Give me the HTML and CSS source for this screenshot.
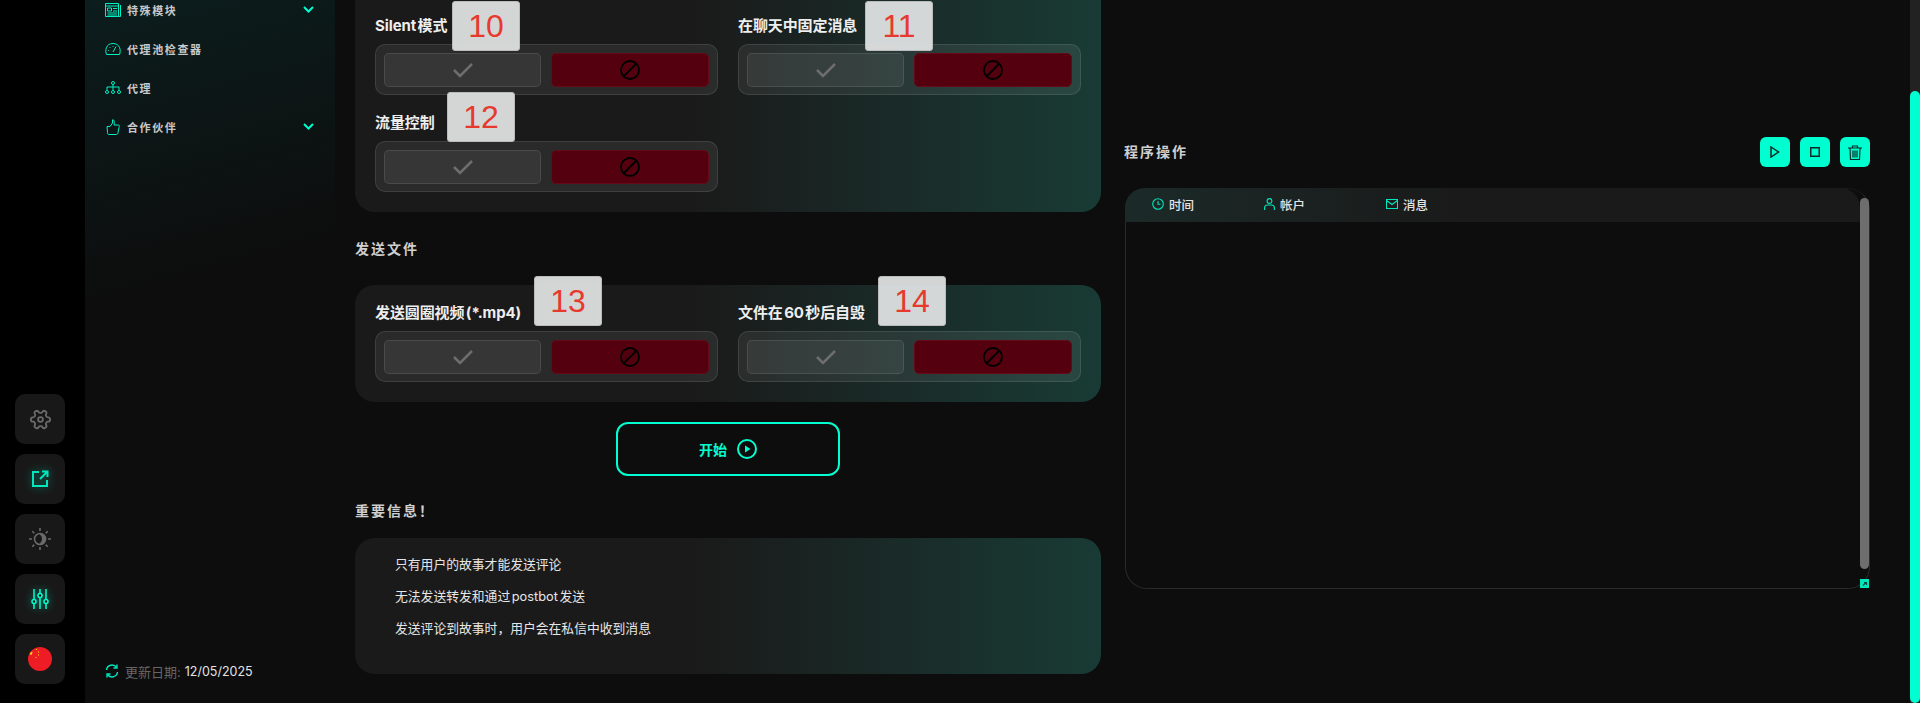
FILE: index.html
```html
<!DOCTYPE html>
<html lang="zh">
<head>
    <meta charset="UTF-8">
    <title>程序操作</title>
    <link rel="stylesheet" href="styles.css">
</head>
<body>
    <div class="rail">
        <button class="rail-btn">
            <svg class="gear" width="23" height="23" viewBox="0 0 24 24" fill="none" stroke="#6a6a6a" stroke-width="1.900"><path d="M12.22 2h-.44a2 2 0 0 0-2 2v.18a2 2 0 0 1-1 1.73l-.43.25a2 2 0 0 1-2 0l-.15-.08a2 2 0 0 0-2.73.73l-.22.38a2 2 0 0 0 .73 2.73l.15.1a2 2 0 0 1 1 1.72v.51a2 2 0 0 1-1 1.74l-.15.09a2 2 0 0 0-.73 2.73l.22.38a2 2 0 0 0 2.73.73l.15-.08a2 2 0 0 1 2 0l.43.25a2 2 0 0 1 1 1.73V20a2 2 0 0 0 2 2h.44a2 2 0 0 0 2-2v-.18a2 2 0 0 1 1-1.73l.43-.25a2 2 0 0 1 2 0l.15.08a2 2 0 0 0 2.73-.73l.22-.39a2 2 0 0 0-.73-2.73l-.15-.08a2 2 0 0 1-1-1.74v-.5a2 2 0 0 1 1-1.74l.15-.09a2 2 0 0 0 .73-2.73l-.22-.38a2 2 0 0 0-2.73-.73l-.15.08a2 2 0 0 1-2 0l-.43-.25a2 2 0 0 1-1-1.73V4a2 2 0 0 0-2-2z"/><circle cx="12" cy="12" r="2.500"/></svg>
        </button>
        <button class="rail-btn glow">
            <svg width="18" height="18" viewBox="0 0 18 18" fill="none" stroke="#00e6bd" stroke-width="2"><path d="M8 2H2V16H16V10"/><path d="M9 9L16 2M11 1.500H16.500V7"/></svg>
        </button>
        <button class="rail-btn">
            <svg width="24" height="24" viewBox="0 0 24 24" fill="none" stroke="#6a6a6a" stroke-width="1.600"><circle cx="12" cy="12" r="5.500"/><path d="M12.500 7A5 5 0 0 1 12.500 17A6.500 6.500 0 0 0 12.500 7Z" fill="#6a6a6a"/><path d="M12 1V4M12 20V23M1 12H4M20 12H23M4.200 4.200L6.300 6.300M17.700 17.700L19.800 19.800M4.200 19.800L6.300 17.700M17.700 6.300L19.800 4.200"/></svg>
        </button>
        <button class="rail-btn glow">
            <svg width="18" height="20" viewBox="0 0 18 20" fill="#181818" stroke="#00ffd0" stroke-width="1.500"><path d="M3 0V20M9 0V20M15 0V20"/><circle cx="3" cy="12.500" r="2"/><circle cx="9" cy="6.500" r="2"/><circle cx="15" cy="12.500" r="2"/></svg>
        </button>
        <button class="rail-btn">
            <svg width="24" height="24" viewBox="0 0 24 24"><circle cx="12" cy="12" r="12" fill="#ee1c25"/><path d="M2 6L4.500 4.500L4 7.500L2.500 8Z" fill="#ffde00"/><path d="M8 2.500H9M10.500 4.500V5.500M10.500 7.500V8.500M7.500 10.500H8.500" stroke="#ffde00"/></svg>
        </button>
    </div>

    <aside class="sidebar">
        <nav class="side-nav">
            <div class="side-item">
                <svg class="side-icon" width="16" height="14" viewBox="0 0 16 14" fill="none" stroke="#00f0c4"><path d="M.5.500H13.500V13.500H.5ZM15.500 2V13.500H13.500M.5 3H13.500"/><path d="M2.500 5H6.500V8H2.500ZM8 5.500H12M8 8H12M2.500 10H12M2.500 12H12"/></svg>
                <span>特殊模块</span>
                <svg class="chevron" width="11" height="7" viewBox="0 0 11 7" fill="none" stroke="#00ffd0" stroke-width="2"><path d="M1 1L5.500 5.500L10 1"/></svg>
            </div>
            <div class="side-item">
                <svg class="side-icon" width="16" height="12" viewBox="0 0 16 12" fill="none" stroke="#00f0c4"><path d="M1.500 11.500H14.500C16 8 15.500 .5 8 .5C.5 .5 0 8 1.500 11.500Z"/><path d="M8 9L11 3.500M3.500 7V7.800M5 4V4.800M8 3V3.800"/></svg>
                <span>代理池检查器</span>
            </div>
            <div class="side-item">
                <svg class="side-icon" width="16" height="13" viewBox="0 0 16 13" fill="none" stroke="#00f0c4"><circle cx="8" cy="2" r="1.500"/><path d="M8 3.500V6M2 9V6H14V9M8 6V9"/><circle cx="2" cy="11" r="1.500"/><circle cx="8" cy="11" r="1.500"/><circle cx="14" cy="11" r="1.500"/></svg>
                <span>代理</span>
            </div>
            <div class="side-item">
                <svg class="side-icon" width="16" height="16" viewBox="0 0 16 16" fill="none" stroke="#00f0c4"><path d="M2 7.500H5L7.500 4V.8C9.500 .5 9.500 3.500 9 6H13C14.500 6 14.500 7 14 8.500L13 13.500C13 15 12 15.500 11 15.500H4C2.800 15.500 2.500 15 2.500 13.500Z"/></svg>
                <span>合作伙伴</span>
                <svg class="chevron" width="11" height="7" viewBox="0 0 11 7" fill="none" stroke="#00ffd0" stroke-width="2"><path d="M1 1L5.500 5.500L10 1"/></svg>
            </div>
        </nav>
        <div class="updated">
            <svg width="14" height="14" viewBox="0 0 14 14" fill="none" stroke="#00e6bd" stroke-width="1.400"><path d="M1.500 6A5.500 5.500 0 0 1 11.500 3.500M12.500 8A5.500 5.500 0 0 1 2.500 10.500"/><path d="M12 .5V4H8.500M2 13.500V10H5.500"/></svg>
            <span class="updated-label">更新日期:</span>
            <span class="updated-date">12/05/2025</span>
        </div>
    </aside>

    <main class="main">
        <div class="settings">
            <div class="card card-top">
                <div class="field-grid">
                    <div class="field">
                        <label>Silent 模式</label>
                        <div class="switch">
                            <button class="opt-on"><svg width="20" height="15" viewBox="0 0 20 15" fill="none" stroke="#6e6e6e" stroke-width="2.500"><path d="M1 7L7 13L19 1"/></svg></button>
                            <button class="opt-off"><svg width="20" height="20" viewBox="0 0 20 20" fill="none" stroke="#000" stroke-width="1.800"><circle cx="10" cy="10" r="9"/><path d="M16 4L4 16"/></svg></button>
                        </div>
                        <div class="tag tag-10">10</div>
                    </div>
                    <div class="field">
                        <label>在聊天中固定消息</label>
                        <div class="switch">
                            <button class="opt-on"><svg width="20" height="15" viewBox="0 0 20 15" fill="none" stroke="#6e6e6e" stroke-width="2.500"><path d="M1 7L7 13L19 1"/></svg></button>
                            <button class="opt-off"><svg width="20" height="20" viewBox="0 0 20 20" fill="none" stroke="#000" stroke-width="1.800"><circle cx="10" cy="10" r="9"/><path d="M16 4L4 16"/></svg></button>
                        </div>
                        <div class="tag tag-11">11</div>
                    </div>
                    <div class="field">
                        <label>流量控制</label>
                        <div class="switch">
                            <button class="opt-on"><svg width="20" height="15" viewBox="0 0 20 15" fill="none" stroke="#6e6e6e" stroke-width="2.500"><path d="M1 7L7 13L19 1"/></svg></button>
                            <button class="opt-off"><svg width="20" height="20" viewBox="0 0 20 20" fill="none" stroke="#000" stroke-width="1.800"><circle cx="10" cy="10" r="9"/><path d="M16 4L4 16"/></svg></button>
                        </div>
                        <div class="tag tag-12">12</div>
                    </div>
                </div>
            </div>

            <h3 class="section-title files-title">发送文件</h3>
            <div class="card">
                <div class="field-grid">
                    <div class="field">
                        <label>发送圆圈视频 (*.mp4)</label>
                        <div class="switch">
                            <button class="opt-on"><svg width="20" height="15" viewBox="0 0 20 15" fill="none" stroke="#6e6e6e" stroke-width="2.500"><path d="M1 7L7 13L19 1"/></svg></button>
                            <button class="opt-off"><svg width="20" height="20" viewBox="0 0 20 20" fill="none" stroke="#000" stroke-width="1.800"><circle cx="10" cy="10" r="9"/><path d="M16 4L4 16"/></svg></button>
                        </div>
                        <div class="tag tag-13">13</div>
                    </div>
                    <div class="field">
                        <label>文件在 60 秒后自毁</label>
                        <div class="switch">
                            <button class="opt-on"><svg width="20" height="15" viewBox="0 0 20 15" fill="none" stroke="#6e6e6e" stroke-width="2.500"><path d="M1 7L7 13L19 1"/></svg></button>
                            <button class="opt-off"><svg width="20" height="20" viewBox="0 0 20 20" fill="none" stroke="#000" stroke-width="1.800"><circle cx="10" cy="10" r="9"/><path d="M16 4L4 16"/></svg></button>
                        </div>
                        <div class="tag tag-14">14</div>
                    </div>
                </div>
            </div>

            <button class="start-btn">
                开始
                <svg width="20" height="20" viewBox="0 0 20 20" fill="none" stroke="#00ffd0" stroke-width="2"><circle cx="10" cy="10" r="9"/><path d="M8 6.500L13.500 10L8 13.500Z" fill="#00ffd0" stroke="none"/></svg>
            </button>

            <h3 class="section-title info-title">重要信息！</h3>
            <div class="card info-card">
                <p>只有用户的故事才能发送评论</p>
                <p>无法发送转发和通过 postbot 发送</p>
                <p>发送评论到故事时，用户会在私信中收到消息</p>
            </div>
        </div>

        <div class="log-pane">
            <div class="log-head">
                <h3 class="section-title">程序操作</h3>
                <div class="log-actions">
                    <button class="act-btn"><svg width="10" height="12" viewBox="0 0 10 12" fill="none" stroke="#0a2a26" stroke-width="1.500"><path d="M1 1L8.500 6L1 11Z"/></svg></button>
                    <button class="act-btn"><svg width="10" height="10" viewBox="0 0 10 10" fill="none" stroke="#0a2a26" stroke-width="1.500"><rect x=".75" y=".75" width="8.500" height="8.500"/></svg></button>
                    <button class="act-btn"><svg width="14" height="15" viewBox="0 0 14 15" fill="none" stroke="#0a2a26" stroke-width="1.200"><path d="M0 3H14M4.500 3V1H9.500V3M2 3L2.500 14.500H11.500L12 3M5 5.500V12.500M7 5.500V12.500M9 5.500V12.500"/></svg></button>
                </div>
            </div>
            <div class="log-table">
                <div class="log-inner">
                    <div class="log-cols">
                        <div class="log-col col-time">
                            <svg width="12" height="12" viewBox="0 0 12 12" fill="none" stroke="#00e6bd" stroke-width="1.100"><circle cx="6" cy="6" r="5.300"/><path d="M6 3V6.300H8.500"/></svg>
                            时间
                        </div>
                        <div class="log-col col-account">
                            <svg width="11" height="12" viewBox="0 0 11 12" fill="none" stroke="#00e6bd" stroke-width="1.100"><circle cx="5.500" cy="3" r="2.400"/><path d="M.6 12V10C.6 8 2 7 3.500 7H7.500C9 7 10.400 8 10.400 10V12"/></svg>
                            帐户
                        </div>
                        <div class="log-col col-message">
                            <svg width="12" height="10" viewBox="0 0 12 10" fill="none" stroke="#00e6bd" stroke-width="1.100"><path d="M.5.5H11.500V9.500H.5ZM.5 1.500L6 5.500L11.500 1.500"/></svg>
                            消息
                        </div>
                    </div>
                </div>
                <div class="log-scroll"><div class="log-thumb"></div></div>
                <div class="log-resize">
                    <svg width="9" height="9" viewBox="0 0 9 9"><path d="M3 6.500L6 3.500M4 3.500H6.500V6" fill="none" stroke="#0a4a40" stroke-width="1.200"/></svg>
                </div>
            </div>
        </div>

        <div class="page-scroll"><div class="page-thumb"></div></div>
    </main>
</body>
</html>
```

FILE: styles.css
```css
* { margin: 0; padding: 0; box-sizing: border-box; }
html, body { height: 100%; }
body { display: flex; overflow: hidden; background: #0d0d0d; color: #ddd; font-family: Inter, "Noto Sans CJK SC", sans-serif; }
button { border: none; font-family: inherit; cursor: pointer; }

.rail { width: 85px; flex-shrink: 0; background: #000; display: flex; flex-direction: column; justify-content: flex-end; gap: 10px; padding: 0 0 19px 15px; }
.rail-btn { width: 50px; height: 50px; background: #181818; border-radius: 10px; display: flex; align-items: center; justify-content: center; }
.rail-btn.glow svg { filter: drop-shadow(0 0 4px rgba(0,255,208,0.5)); }
.gear { transform: rotate(90deg); }

.sidebar { width: 250px; flex-shrink: 0; display: flex; flex-direction: column; background: linear-gradient(165deg, #0c1d1d 0%, #0d0d0d 40%); }
.side-nav { margin-top: -10px; }
.side-item { height: 39px; display: flex; align-items: center; padding: 0 20px; font-size: 11px; font-weight: 700; letter-spacing: 1.600px; color: #c8c8c8; }
.side-icon { width: 16px; margin-right: 6px; flex-shrink: 0; }
.chevron { margin-left: auto; margin-right: 1px; }
.updated { margin-top: auto; padding: 0 0 14px 20px; display: flex; align-items: center; font-size: 13px; height: 50px; }
.updated svg { margin-right: 6px; }
.updated-label { color: #666; margin-right: 4px; }
.updated-date { color: #e4e4e4; font-size: 12.500px; }

.main { flex: 1; display: flex; min-width: 0; }
.settings { width: 746px; margin-left: 20px; flex-shrink: 0; }
.card { background: linear-gradient(90deg, #1a1a1a 45%, #193b35 100%); border-radius: 20px; padding: 15px 20px 20px; }
.card-top { margin-top: -30px; padding-top: 43px; }
.field-grid { display: grid; grid-template-columns: 343px 343px; column-gap: 20px; row-gap: 15px; }
.field { position: relative; }
.field label { display: block; height: 26px; line-height: 26px; margin-bottom: 5px; font-size: 15px; font-weight: 700; word-spacing: -2px; letter-spacing: -0.100px; color: #eee; }
.switch { height: 51px; display: flex; gap: 10px; padding: 8px 8px 7px; border: 1px solid rgba(255,255,255,0.1); border-radius: 10px; background: rgba(255,255,255,0.07); }
.switch button { border-radius: 5px; display: flex; align-items: center; justify-content: center; }
.opt-on { flex: 0 0 157px; background: rgba(255,255,255,0.06); border: 1px solid rgba(255,255,255,0.1); }
.opt-off { flex: 1; background: #55000e; border: 1px solid #660a18; }

.tag { position: absolute; width: 68px; height: 50px; background: rgba(222,224,224,0.95); border: 1px solid #bbb; border-radius: 3px; color: #e63a2e; font-family: "Liberation Sans", sans-serif; font-size: 32px; line-height: 48px; text-align: center; }
.tag-10 { left: 77px; top: -12px; }
.tag-11 { left: 127px; top: -12px; }
.tag-12 { left: 72px; top: -18px; }
.tag-13 { left: 159px; top: -24px; }
.tag-14 { left: 140px; top: -24px; }

.section-title { font-size: 14px; font-weight: 700; letter-spacing: 2px; line-height: 20px; color: #cfcfcf; }
.files-title { margin: 27px 0 26px; }
.info-title { margin: 25px 0 17px; }

.start-btn { display: flex; align-items: center; justify-content: center; gap: 10px; width: 224px; height: 54px; margin: 20px auto 0; background: transparent; border: 2px solid #00ffd0; border-radius: 12px; color: #00ffd0; font-size: 14px; font-weight: 700; }

.info-card { padding: 11px 20px 29px 40px; }
.info-card p { font-size: 12.800px; line-height: 32px; word-spacing: -2px; color: #e6e6e6; }

.log-pane { width: 745px; margin-left: 24px; margin-top: 137px; flex-shrink: 0; }
.log-head { height: 30px; display: flex; align-items: center; justify-content: space-between; }
.log-head h3 { margin-left: -1px; }
.log-actions { display: flex; gap: 10px; }
.act-btn { width: 30px; height: 30px; border-radius: 6px; background: #00ffd0; display: flex; align-items: center; justify-content: center; }

.log-table { position: relative; display: flex; height: 401px; margin-top: 21px; border: 1px solid #2a2a2a; border-top-color: #1a1a1a; border-radius: 22px; }
.log-inner { flex: 1; }
.log-cols { display: flex; height: 34px; margin-top: -1px; margin-left: -1px; padding-bottom: 2px; align-items: center; background: linear-gradient(90deg, #1b2a28 0%, #1a1a1a 45%); border-radius: 20px 20px 0 0; }
.log-col { display: flex; align-items: center; gap: 5px; font-size: 12.500px; font-weight: 500; color: #e4e4e4; }
.col-time { width: 110px; padding-left: 27px; }
.col-account { width: 124px; padding-left: 29px; }
.col-message { padding-left: 27px; }
.log-scroll { width: 9px; padding-top: 9px; }
.log-thumb { height: 371px; background: #6e6e6e; border-radius: 5px; }
.log-resize { position: absolute; right: 0; bottom: 0; width: 9px; height: 9px; background: #00e6bd; display: flex; }

.page-scroll { width: 10px; margin-left: auto; background: #222; padding-top: 91px; flex-shrink: 0; }
.page-thumb { height: 100%; background: #00ffd0; border-radius: 5px; }
```
